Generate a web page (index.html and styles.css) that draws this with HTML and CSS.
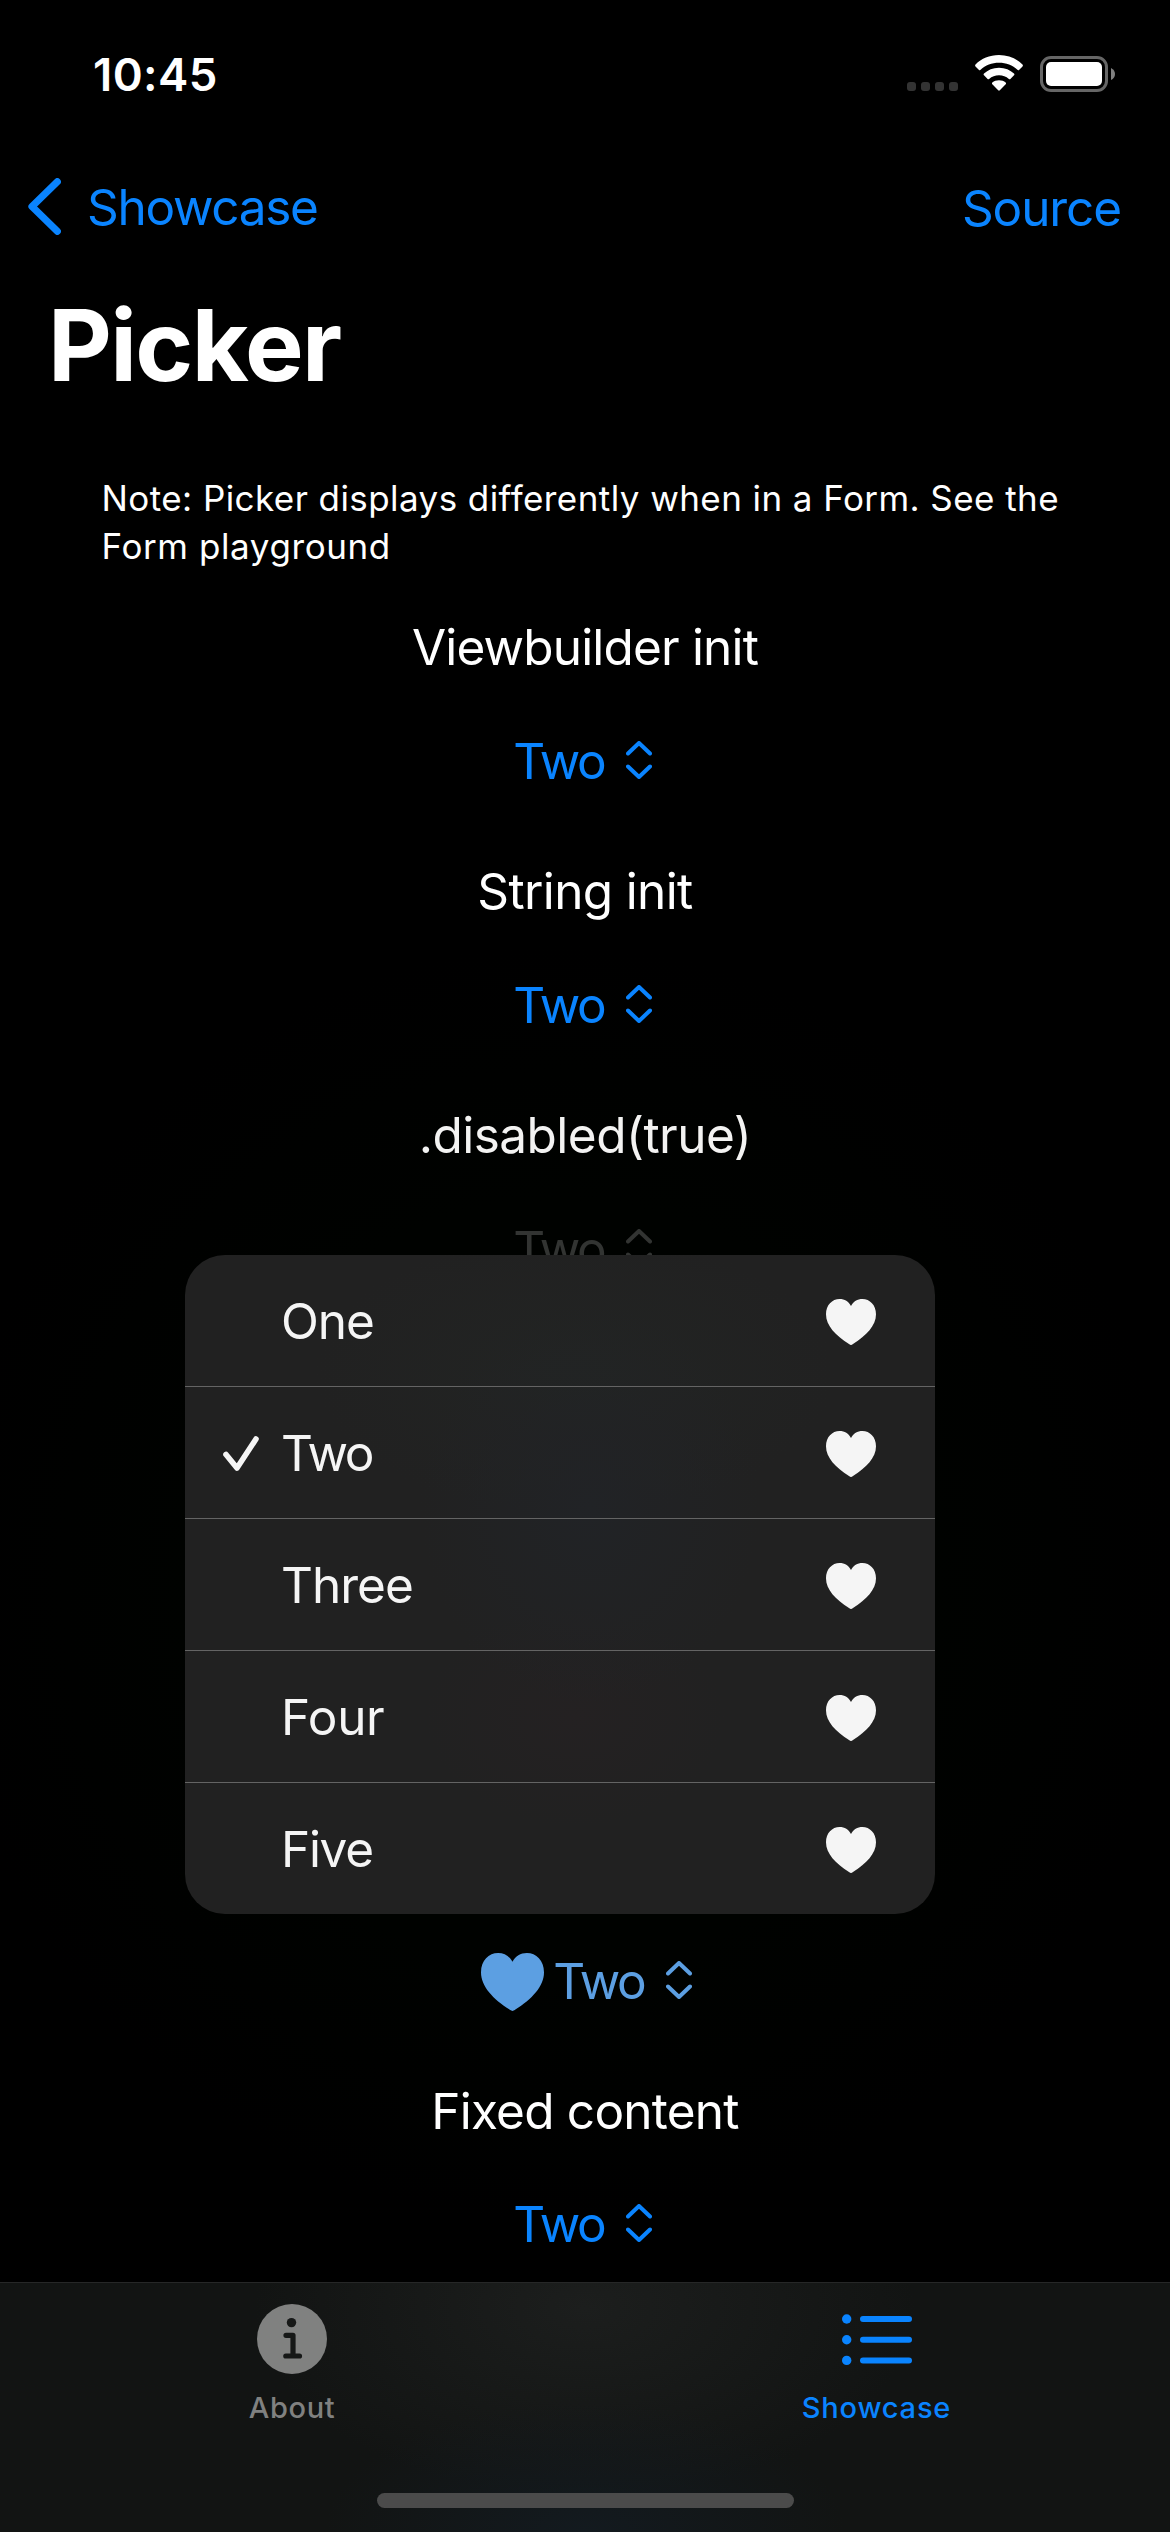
FILE: index.html
```html
<!DOCTYPE html>
<html lang="en">
<head>
<meta charset="utf-8">
<title>Picker</title>
<link rel="stylesheet" href="styles.css">
</head>
<body>
<svg class="symbols" aria-hidden="true">
  <symbol id="heart" viewBox="0 0 50 46" preserveAspectRatio="none"><path d="M25 46C24.400 46 23.800 45.600 23 45.100C9.500 36.300 0 26.500 0 15.200C0 6 6.200 0 13.600 0C18.600 0 22.700 2.600 25 7C27.300 2.600 31.400 0 36.400 0C43.800 0 50 6 50 15.200C50 26.500 40.500 36.300 27 45.100C26.200 45.600 25.600 46 25 46Z" fill="currentColor"/></symbol>
  <symbol id="updown" viewBox="0 0 26 38"><path d="M2 12.500 13 2 24 12.500M2 25.500 13 36 24 25.500" fill="none" stroke="currentColor" stroke-width="4" stroke-linecap="round" stroke-linejoin="round"/></symbol>
</svg>
<div class="screen">
  <header class="status">
    <span class="time">10:45</span>
    <div class="indicators">
      <div class="signal"><i></i><i></i><i></i><i></i></div>
      <svg class="wifi" viewBox="0 0 48 36"><path d="M24 0C33.500 0 41.500 3.500 47.500 9.500Q48.300 10.500 47.500 11.400L44 15Q43.400 15.500 42.700 14.900C37.500 10.200 31.200 7.700 24 7.700C16.800 7.700 10.500 10.200 5.300 14.900Q4.600 15.500 4 15L.5 11.400Q-.3 10.500.5 9.500C6.500 3.500 14.500 0 24 0ZM24 12.700C30.200 12.700 35.100 14.900 39 18.600Q39.800 19.500 39 20.300L35.400 23.900Q34.700 24.500 33.900 23.900C31 21.500 27.900 20.300 24 20.300C20.100 20.300 17 21.500 14.100 23.900Q13.300 24.500 12.600 23.900L9 20.300Q8.200 19.500 9 18.600C12.900 14.900 17.800 12.700 24 12.700ZM24 25.300C26.700 25.300 28.900 26.100 30.700 27.600Q31.400 28.400 30.700 29.200L24.800 35.300Q24 36 23.200 35.300L17.300 29.200Q16.600 28.400 17.300 27.600C19.100 26.100 21.300 25.300 24 25.300Z" fill="#fff"/></svg>
      <svg class="battery" viewBox="0 0 75 36"><rect x="1.500" y="1.500" width="65" height="33" rx="9.500" fill="none" stroke="#666" stroke-width="3"/><rect x="6" y="6" width="56" height="24" rx="5" fill="#fff"/><path d="M71 12V24Q75 22 75 18T71 12Z" fill="#808080"/></svg>
    </div>
  </header>
  <nav class="nav">
    <a class="back"><svg class="chevron" viewBox="0 0 33 57"><path d="M29.300 3.700 4 28.500 29.300 53.300" fill="none" stroke="currentColor" stroke-width="7.200" stroke-linecap="round" stroke-linejoin="round"/></svg><span class="back-label">Showcase</span></a>
    <a class="source">Source</a>
  </nav>
  <h1 class="title">Picker</h1>
  <main class="content">
    <p class="note">Note: Picker displays differently when in a Form. See the<br><span class="note-end">Form playground</span></p>
    <section class="group"><h2 class="label viewbuilder">Viewbuilder init</h2><div class="pick"><span class="value">Two</span><svg class="updown"><use href="#updown"/></svg></div></section>
    <section class="group"><h2 class="label string">String init</h2><div class="pick"><span class="value">Two</span><svg class="updown"><use href="#updown"/></svg></div></section>
    <section class="group obscured"><h2 class="label disabled-label">.disabled(true)</h2><div class="pick disabled"><span class="value">Two</span><svg class="updown"><use href="#updown"/></svg></div></section>
    <div class="pick hearted"><svg class="big-heart"><use href="#heart"/></svg><span class="value">Two</span><svg class="updown"><use href="#updown"/></svg></div>
    <section class="group last"><h2 class="label fixed">Fixed content</h2><div class="pick"><span class="value">Two</span><svg class="updown"><use href="#updown"/></svg></div></section>
  </main>
  <footer class="tabs">
    <div class="tab-row">
      <a class="tab about"><svg class="tab-icon" viewBox="0 0 70 70"><circle cx="35" cy="35" r="35" fill="currentColor"/><circle cx="34.500" cy="18.600" r="4.700" fill="#161817"/><path d="M29 31.300H36V52M28.800 52H42.500" fill="none" stroke="#161817" stroke-width="5.200" stroke-linecap="round" stroke-linejoin="round"/></svg><span>About</span></a>
      <a class="tab showcase"><svg class="tab-icon" viewBox="0 0 70 70"><g fill="currentColor"><circle cx="4.700" cy="15" r="4.700"/><circle cx="4.700" cy="35.700" r="4.700"/><circle cx="4.700" cy="56.400" r="4.700"/></g><path d="M21 15H67M21 35.700H67M21 56.400H67" stroke="currentColor" stroke-width="6" stroke-linecap="round"/></svg><span>Showcase</span></a>
    </div>
    <div class="home"></div>
  </footer>
  <div class="menu">
    <div class="option"><span class="check"></span><span class="name one">One</span><svg class="heart"><use href="#heart"/></svg></div>
    <div class="option"><svg class="check" viewBox="0 0 36 35"><path d="M3 18.500 14 32 33 3" fill="none" stroke="currentColor" stroke-width="5.600" stroke-linecap="round" stroke-linejoin="round"/></svg><span class="name value">Two</span><svg class="heart"><use href="#heart"/></svg></div>
    <div class="option"><span class="check"></span><span class="name three">Three</span><svg class="heart"><use href="#heart"/></svg></div>
    <div class="option"><span class="check"></span><span class="name four">Four</span><svg class="heart"><use href="#heart"/></svg></div>
    <div class="option"><span class="check"></span><span class="name five">Five</span><svg class="heart"><use href="#heart"/></svg></div>
  </div>
</div>
</body>
</html>
```
FILE: styles.css
```css
* { box-sizing: border-box; margin: 0; padding: 0; }
html, body { background: #000; }
body { font-family: Inter, "Liberation Sans", sans-serif; font-size: 49.5px; line-height: 60px; color: #fff; font-weight: 400; }
.symbols { display: none; }
.screen { position: relative; width: 1170px; height: 2532px; overflow: hidden; display: flex; flex-direction: column; background: radial-gradient(ellipse 620px 640px at 560px 1585px, #000200 60%, #000 100%); }
.status { height: 141px; padding: 44px 55px 0 93px; display: flex; justify-content: space-between; align-items: flex-start; }
.time { font-size: 45.5px; font-weight: 600; letter-spacing: 0.4px; padding-top: 1px; }
.indicators { display: flex; align-items: flex-start; padding-top: 11px; }
.signal { display: flex; gap: 5px; padding-top: 27px; margin-right: 17px; }
.signal i { width: 9px; height: 9px; border-radius: 3px; background: #333; }
.wifi { width: 48px; height: 36px; margin-right: 17px; }
.battery { width: 75px; height: 36px; margin-top: 1px; }
.nav { height: 144px; padding: 36px 49px 0 28px; display: flex; justify-content: space-between; color: #0a84ff; }
.back { display: flex; gap: 26px; }
.back-label { letter-spacing: -1.3px; }
.source { letter-spacing: -1.1px; padding-top: 1px; }
.chevron { width: 33px; height: 57px; margin-top: 1px; }
.title { height: 120px; line-height: 120px; padding-left: 48px; font-size: 98.6px; font-weight: 700; letter-spacing: -1.65px; }
.content { padding-top: 69px; height: 1877px; display: flex; flex-direction: column; }
.note { padding-left: 101.5px; font-size: 35px; line-height: 48px; margin-bottom: 47px; letter-spacing: 0.43px; white-space: nowrap; }
.note-end { letter-spacing: 0.6px; }
.group { display: flex; flex-direction: column; align-items: center; gap: 54px; margin-bottom: 70px; }
.label { font-size: inherit; font-weight: 400; white-space: nowrap; }
.viewbuilder { letter-spacing: -0.83px; }
.string { letter-spacing: -0.64px; }
.disabled-label { color: #f3f3f2; letter-spacing: -0.53px; }
.fixed { letter-spacing: -0.77px; }
.value { letter-spacing: -2.4px; }
.pick { height: 60px; display: flex; align-items: flex-start; justify-content: center; gap: 21.5px; color: #0a84ff; }
.updown { width: 26px; height: 38px; margin: 10px 5px 0 0; }
.obscured { margin-bottom: 672px; }
.disabled { color: #323432; }
.hearted { color: #5c9fe2; margin-bottom: 70px; padding-left: 8px; }
.big-heart { width: 63px; height: 58px; margin: 2px -12.5px 0 0; }
.last { gap: 53px; }
.tabs { height: 250px; border-top: 1px solid #262727; background: radial-gradient(ellipse 260px 130px at 50% 100%, #131a1f, transparent), radial-gradient(ellipse 330px 190px at 50% 10%, #1c1e1d, transparent), #121413; }
.tab-row { display: grid; grid-template-columns: 1fr 1fr; height: 210px; padding-top: 21px; }
.tab { display: flex; flex-direction: column; align-items: center; gap: 14px; font-size: 29px; font-weight: 500; line-height: 40px; letter-spacing: 0.6px; }
.tab-icon { width: 70px; height: 70px; }
.about { color: #808180; padding-right: 1px; }
.showcase { color: #0a84ff; letter-spacing: 0.8px; padding-right: 2px; }
.home { width: 417px; height: 15px; margin: 0 auto; border-radius: 8px; background: #4b4b4b; }
.menu { position: absolute; left: 185px; top: 1255px; width: 750px; height: 659px; border-radius: 40px; overflow: hidden; color: #f5f5f5; background: radial-gradient(ellipse 170px 200px at 54% 38%, #212326, transparent), radial-gradient(ellipse 260px 140px at 52% 18%, #222423, transparent), radial-gradient(ellipse 150px 110px at 52% 70%, #242122, transparent), #212121; }
.option { height: 132px; padding: 36px 59px 0 38px; display: flex; border-bottom: 1px solid #646464; }
.option:last-child { height: 131px; border-bottom: 0; }
.check { width: 36px; height: 35px; margin: 13px 22px 0 0; }
.name { flex: 1; }
.one { letter-spacing: -1.1px; }
.three { letter-spacing: -1px; }
.four { letter-spacing: -0.4px; }
.five { letter-spacing: -1.3px; }
.heart { width: 50px; height: 46px; margin-top: 8px; }
```
